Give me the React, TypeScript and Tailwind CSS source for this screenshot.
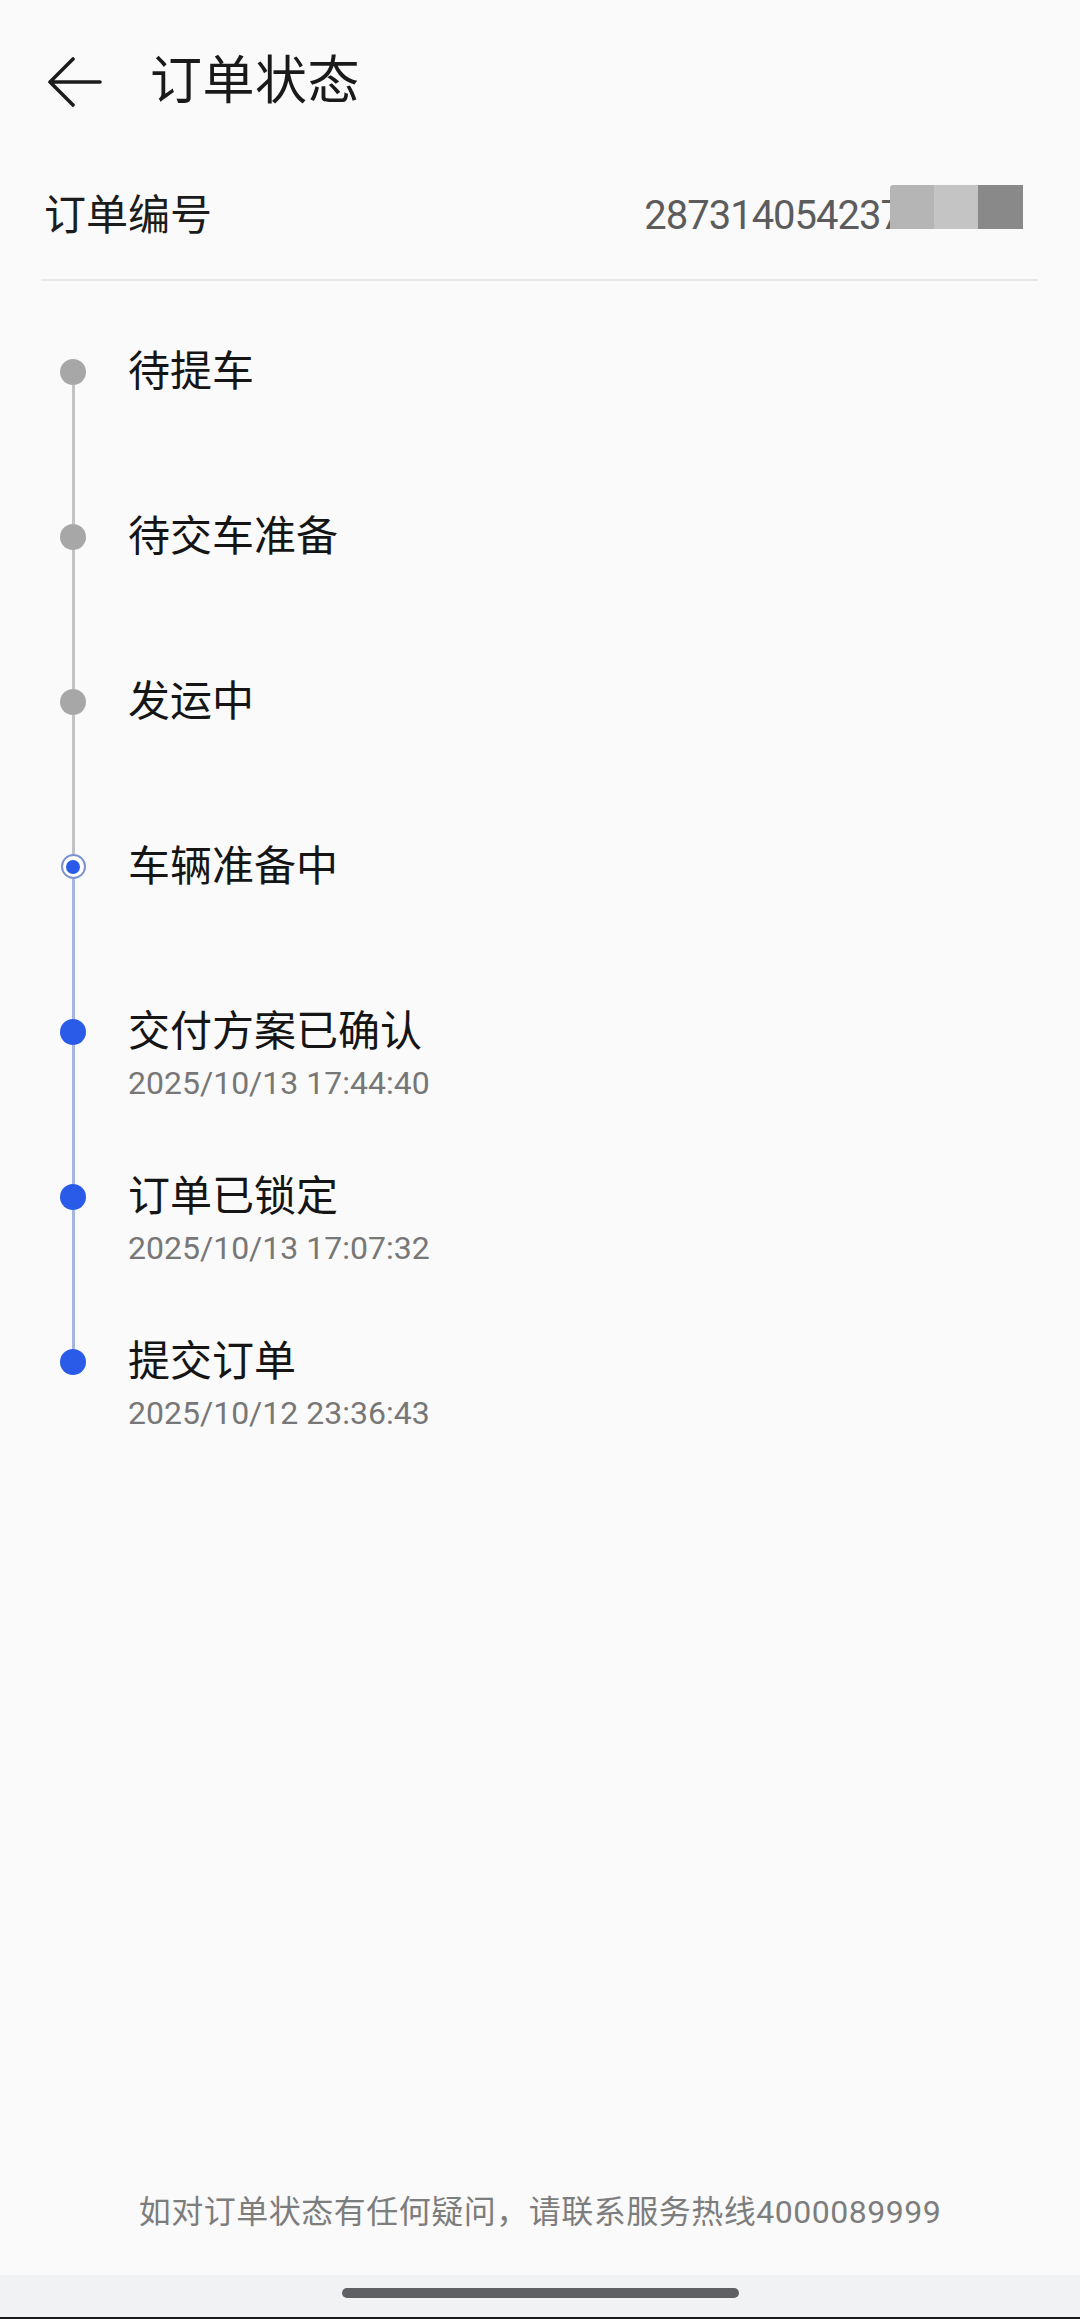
import React from "react";

type Step = {
  title: string;
  date?: string;
  state: "todo" | "current" | "done";
  top: "none" | "gray" | "blue";
  bottom: "none" | "gray" | "blue";
};

const steps: Step[] = [
  { title: "待提车", state: "todo", top: "none", bottom: "gray" },
  { title: "待交车准备", state: "todo", top: "gray", bottom: "gray" },
  { title: "发运中", state: "todo", top: "gray", bottom: "gray" },
  { title: "车辆准备中", state: "current", top: "gray", bottom: "blue" },
  { title: "交付方案已确认", date: "2025/10/13 17:44:40", state: "done", top: "blue", bottom: "blue" },
  { title: "订单已锁定", date: "2025/10/13 17:07:32", state: "done", top: "blue", bottom: "blue" },
  { title: "提交订单", date: "2025/10/12 23:36:43", state: "done", top: "blue", bottom: "none" },
];

function segClass(c: "none" | "gray" | "blue") {
  if (c === "gray") return "bg-[#c3c3c3]";
  if (c === "blue") return "bg-[#a5b7df]";
  return "bg-transparent";
}

function Dot({ state }: { state: Step["state"] }) {
  if (state === "current") {
    return (
      <div className="w-[25px] h-[25px] shrink-0 rounded-full border-2 border-[#7b93d0] bg-white flex items-center justify-center">
        <div className="w-[14px] h-[14px] rounded-full bg-[#2a5be8]" />
      </div>
    );
  }
  if (state === "done") {
    return <div className="w-[26px] h-[26px] shrink-0 rounded-full bg-[#2a5be8]" />;
  }
  return <div className="w-[26px] h-[26px] shrink-0 rounded-full bg-[#a7a7a7]" />;
}

export default function App() {
  return (
    <div
      className="min-h-[2319px] w-[1080px] bg-[#fafafa] flex flex-col"
      style={{ fontFamily: 'Roboto, "Noto Sans CJK SC", "Noto Sans", sans-serif' }}
    >
      {/* Header */}
      <div className="h-[164px] flex items-center pl-[46px]">
        <svg width="56" height="50" viewBox="0 0 56 50" fill="none">
          <path
            d="M54 25 H4 M27 2 L4 25 L27 48"
            stroke="#1c1c1c"
            strokeWidth="3.6"
            strokeLinecap="round"
            strokeLinejoin="round"
          />
        </svg>
        <div className="ml-[48px] text-[52px] leading-none text-[#1a1a1a] tracking-[0.5px]">订单状态</div>
      </div>

      {/* Order number */}
      <div className="h-[104px] flex items-center justify-between pl-[44px] pr-[57px]">
        <div className="text-[42px] leading-none text-[#1c1c1c]">订单编号</div>
        <div className="flex items-center">
          <span className="text-[40px] leading-none text-[#5c5c5c] tracking-[-1px]">287314054237</span>
          <div className="relative -top-[9px] -ml-[12px] flex h-[44px]">
            <div className="w-[44px] h-full bg-[#b5b5b5] rounded-tl-[3px]" />
            <div className="w-[44px] h-full bg-[#c4c4c4]" />
            <div className="w-[45px] h-full bg-[#898989]" />
          </div>
        </div>
      </div>
      <div className="mt-[11px] h-[2px] ml-[41px] mr-[42px] bg-[#e8e8e8]" />

      {/* Timeline */}
      <div className="mt-[63px] pl-[60px] flex flex-col">
        {steps.map((s, i) => (
          <div key={i} className="h-[165px] flex">
            <div className="w-[26px] flex flex-col items-center">
              <div className={`w-[3px] h-[15px] ${segClass(s.top)}`} />
              <Dot state={s.state} />
              <div className={`w-[3px] flex-1 ${segClass(s.bottom)}`} />
            </div>
            <div className="ml-[42px] flex flex-col">
              <div className="text-[42px] leading-[56px] text-[#151515]">{s.title}</div>
              {s.date && (
                <div className="text-[32px] leading-[46px] text-[#777777]">{s.date}</div>
              )}
            </div>
          </div>
        ))}
      </div>

      <div className="flex-1" />

      {/* Footer */}
      <div className="h-[44px] mb-[41px] flex items-center justify-center text-[32px] leading-[44px] text-[#7d7d7d] tracking-[0.5px]">
        如对订单状态有任何疑问，请联系服务热线4000089999
      </div>
      <div className="h-[42px] bg-[#f1f2f4] flex justify-center pt-[13px]">
        <div className="w-[397px] h-[10px] rounded-full bg-[#5f6063]" />
      </div>
      <div className="h-[2px] bg-[#1a1a1a]" />
    </div>
  );
}
